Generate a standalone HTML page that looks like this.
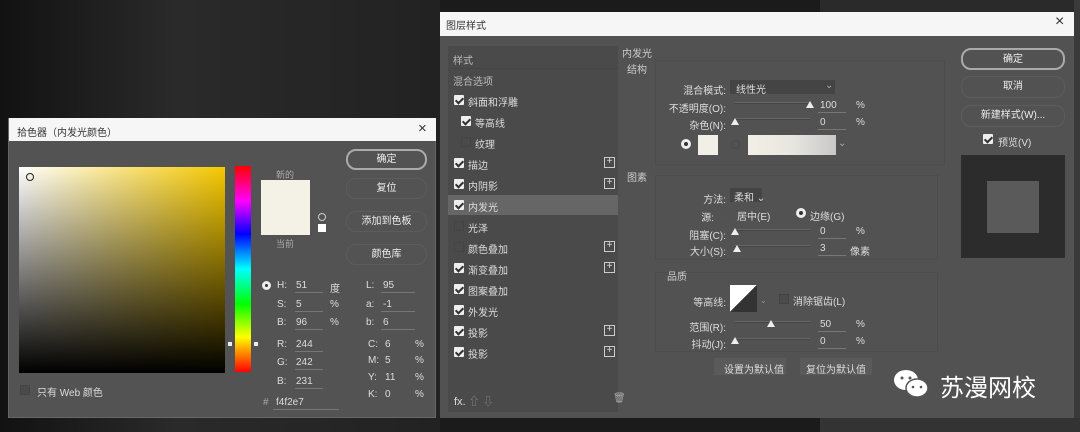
<!DOCTYPE html><html><head><meta charset="utf-8"><style>
*{margin:0;padding:0;box-sizing:border-box}
body{width:1080px;height:432px;overflow:hidden;background:#1b1b1b;font-family:"Liberation Sans","Noto Sans CJK SC",sans-serif;position:relative;color:#ddd;font-size:10px}
.a{position:absolute}
.t{position:absolute;white-space:nowrap}
.r{position:absolute;white-space:nowrap;text-align:right;width:100px}
.cb{position:absolute;width:10px;height:10px;background:#eee;border-radius:1px}
.cb:after{content:"";position:absolute;left:3px;top:1px;width:3px;height:6px;border:solid #333;border-width:0 2px 2px 0;transform:rotate(45deg)}
.ub{position:absolute;width:10px;height:10px;border:1px solid #444;background:#4a4a4a}
.pl{position:absolute;width:11px;height:11px;border:1px solid #ccc;left:604px;color:#ddd;font-size:10px;line-height:8px;text-align:center}
.btn{position:absolute;border:1px solid #777;border-radius:10px;text-align:center;color:#eee;font-size:10px}
.ln{position:absolute;height:1px;background:#777}
.sl{position:absolute;height:2px;background:#444;border-top:1px solid #666}
.tri{position:absolute;width:0;height:0;border-left:4px solid transparent;border-right:4px solid transparent;border-bottom:7px solid #eee}
</style></head><body>
<div class="a" style="left:0;top:0;width:440px;height:432px;background:linear-gradient(90deg,#121212,#2a2a2a 40%,#222)"></div>
<div class="a" style="left:820px;top:0;width:260px;height:14px;background:#2a2a2a"></div>
<div class="a" style="left:1074px;top:0;width:6px;height:432px;background:#3a3a3a"></div>
<div class="a" style="left:820px;top:418px;width:260px;height:14px;background:#333"></div>

<div class="a" style="left:440px;top:12px;width:634px;height:406px;background:#525252"></div>
<div class="a" style="left:440px;top:12px;width:634px;height:24px;background:#f6f6f6"></div>
<div class="t" style="left:446px;top:17px;color:#333;font-size:10px">图层样式</div>
<div class="t" style="left:1055px;top:13px;color:#333;font-size:16px">×</div>
<div class="a" style="left:448px;top:46px;width:170px;height:366px;background:#4a4a4a"></div>
<div class="t" style="left:453px;top:52px;color:#bbb">样式</div>
<div class="a" style="left:448px;top:68px;width:170px;height:1px;background:#444"></div>
<div class="t" style="left:453px;top:73px;color:#bbb">混合选项</div>
<div class="a" style="left:448px;top:195px;width:170px;height:20px;background:#666"></div>

<div class="cb" style="left:454px;top:95px"></div><div class="t" style="left:468px;top:94px">斜面和浮雕</div>
<div class="cb" style="left:461px;top:116px"></div><div class="t" style="left:475px;top:115px">等高线</div>
<div class="ub" style="left:461px;top:137px"></div><div class="t" style="left:475px;top:136px">纹理</div>
<div class="cb" style="left:454px;top:158px"></div><div class="t" style="left:468px;top:157px">描边</div><div class="pl" style="top:157px">+</div>
<div class="cb" style="left:454px;top:179px"></div><div class="t" style="left:468px;top:178px">内阴影</div><div class="pl" style="top:178px">+</div>
<div class="cb" style="left:454px;top:200px"></div><div class="t" style="left:468px;top:199px">内发光</div>
<div class="ub" style="left:454px;top:221px"></div><div class="t" style="left:468px;top:220px">光泽</div>
<div class="ub" style="left:454px;top:242px"></div><div class="t" style="left:468px;top:241px">颜色叠加</div><div class="pl" style="top:241px">+</div>
<div class="cb" style="left:454px;top:263px"></div><div class="t" style="left:468px;top:262px">渐变叠加</div><div class="pl" style="top:262px">+</div>
<div class="cb" style="left:454px;top:284px"></div><div class="t" style="left:468px;top:283px">图案叠加</div>
<div class="cb" style="left:454px;top:305px"></div><div class="t" style="left:468px;top:304px">外发光</div>
<div class="cb" style="left:454px;top:326px"></div><div class="t" style="left:468px;top:325px">投影</div><div class="pl" style="top:325px">+</div>
<div class="cb" style="left:454px;top:347px"></div><div class="t" style="left:468px;top:346px">投影</div><div class="pl" style="top:346px">+</div>
<div class="t" style="left:454px;top:393px;font-size:11px">fx. <span style="color:#888">⇧ ⇩</span></div>
<div class="t" style="left:613px;top:393px;color:#aaa">🗑</div>

<div class="a" style="left:655px;top:60px;width:290px;height:105px;border:1px solid #4c4c4c"></div>
<div class="t" style="left:622px;top:45px;color:#ccc">内发光</div>
<div class="t" style="left:627px;top:61px;color:#ccc">结构</div>
<div class="r" style="left:626px;top:82px">混合模式:</div>
<div class="a" style="left:730px;top:80px;width:105px;height:14px;background:#444"></div>
<div class="t" style="left:736px;top:81px">线性光</div><div class="t" style="left:825px;top:80px;color:#aaa">⌄</div>
<div class="r" style="left:626px;top:100px">不透明度(O):</div>
<div class="sl" style="left:735px;top:102px;width:75px"></div><div class="tri" style="left:806px;top:101px"></div>
<div class="t" style="left:820px;top:100px">100</div><div class="ln" style="left:818px;top:112px;width:28px"></div><div class="t" style="left:856px;top:100px">%</div>
<div class="r" style="left:626px;top:117px">杂色(N):</div>
<div class="sl" style="left:735px;top:118px;width:75px"></div><div class="tri" style="left:731px;top:118px"></div>
<div class="t" style="left:820px;top:117px">0</div><div class="ln" style="left:818px;top:129px;width:28px"></div><div class="t" style="left:856px;top:117px">%</div>
<div class="a" style="left:681px;top:139px;width:10px;height:10px;border-radius:50%;border:3px solid #eee;background:#333"></div>
<div class="a" style="left:698px;top:135px;width:20px;height:20px;background:#f2efe6"></div>
<div class="a" style="left:731px;top:140px;width:9px;height:9px;border-radius:50%;border:1px solid #4a4a4a"></div>
<div class="a" style="left:748px;top:135px;width:88px;height:20px;background:linear-gradient(90deg,#f2efe6,#e8e6e0 50%,#c8c8c8)"></div>
<div class="t" style="left:838px;top:138px;color:#aaa">⌄</div>

<div class="a" style="left:655px;top:175px;width:283px;height:85px;border:1px solid #4c4c4c"></div>
<div class="t" style="left:627px;top:169px;color:#ccc">图素</div>
<div class="r" style="left:626px;top:191px">方法:</div>
<div class="a" style="left:730px;top:188px;width:32px;height:14px;background:#444"></div>
<div class="t" style="left:734px;top:189px">柔和 ⌄</div>
<div class="r" style="left:614px;top:209px">源:</div>
<div class="a" style="left:719px;top:210px;width:8px;height:8px;border-radius:50%;border:1px solid #555"></div>
<div class="t" style="left:737px;top:208px">居中(E)</div>
<div class="a" style="left:796px;top:208px;width:10px;height:10px;border-radius:50%;border:3px solid #eee;background:#333"></div>
<div class="t" style="left:810px;top:208px">边缘(G)</div>
<div class="r" style="left:626px;top:227px">阻塞(C):</div>
<div class="sl" style="left:735px;top:229px;width:75px"></div><div class="tri" style="left:731px;top:228px"></div>
<div class="t" style="left:820px;top:226px">0</div><div class="ln" style="left:818px;top:238px;width:28px"></div><div class="t" style="left:856px;top:226px">%</div>
<div class="r" style="left:626px;top:243px">大小(S):</div>
<div class="sl" style="left:735px;top:245px;width:75px"></div><div class="tri" style="left:733px;top:245px"></div>
<div class="t" style="left:820px;top:243px">3</div><div class="ln" style="left:818px;top:255px;width:28px"></div><div class="t" style="left:850px;top:243px">像素</div>

<div class="a" style="left:655px;top:272px;width:283px;height:80px;border:1px solid #4c4c4c"></div>
<div class="t" style="left:667px;top:268px;color:#ccc">品质</div>
<div class="r" style="left:626px;top:294px">等高线:</div>
<div class="a" style="left:730px;top:285px;width:27px;height:27px;background:linear-gradient(135deg,#fff 50%,#333 50%)"></div>
<div class="t" style="left:760px;top:296px;color:#999;font-size:8px">⌄</div>
<div class="ub" style="left:779px;top:294px"></div>
<div class="t" style="left:793px;top:293px">消除锯齿(L)</div>
<div class="r" style="left:626px;top:319px">范围(R):</div>
<div class="sl" style="left:735px;top:321px;width:75px"></div><div class="tri" style="left:767px;top:320px"></div>
<div class="t" style="left:820px;top:319px">50</div><div class="ln" style="left:818px;top:331px;width:28px"></div><div class="t" style="left:856px;top:319px">%</div>
<div class="r" style="left:626px;top:336px">抖动(J):</div>
<div class="sl" style="left:735px;top:338px;width:75px"></div><div class="tri" style="left:731px;top:337px"></div>
<div class="t" style="left:820px;top:336px">0</div><div class="ln" style="left:818px;top:348px;width:28px"></div><div class="t" style="left:856px;top:336px">%</div>
<div class="a" style="left:714px;top:358px;width:72px;height:17px;background:#5a5a5a"></div><div class="t" style="left:724px;top:361px">设置为默认值</div>
<div class="a" style="left:800px;top:358px;width:72px;height:17px;background:#5a5a5a"></div><div class="t" style="left:806px;top:361px">复位为默认值</div>

<div class="btn" style="left:961px;top:48px;width:104px;height:22px;line-height:19px;border:2px solid #aaa">确定</div>
<div class="btn" style="left:961px;top:76px;width:104px;height:22px;line-height:20px;border-color:#5c5c5c">取消</div>
<div class="btn" style="left:961px;top:105px;width:104px;height:22px;line-height:20px;border-color:#5c5c5c">新建样式(W)...</div>
<div class="cb" style="left:983px;top:134px"></div><div class="t" style="left:998px;top:134px">预览(V)</div>
<div class="a" style="left:961px;top:155px;width:104px;height:103px;background:#2c2c2c"></div>
<div class="a" style="left:987px;top:181px;width:52px;height:52px;background:#5a5a5a"></div>

<svg class="a" style="left:892px;top:368px" width="40" height="32" viewBox="0 0 40 32"><ellipse cx="14" cy="12" rx="12" ry="10" fill="#fff"/><ellipse cx="25" cy="20" rx="11" ry="9" fill="#fff" stroke="#555" stroke-width="1.5"/><circle cx="10" cy="10" r="1.5" fill="#555"/><circle cx="18" cy="10" r="1.5" fill="#555"/><circle cx="21" cy="19" r="1.3" fill="#555"/><circle cx="29" cy="19" r="1.3" fill="#555"/></svg>
<div class="t" style="left:940px;top:368px;font-size:24px;color:#fff">苏漫网校</div>

<div class="a" style="left:8px;top:118px;width:428px;height:300px;background:#535353;border:1px solid #666"></div>
<div class="a" style="left:9px;top:118px;width:427px;height:23px;background:#f6f6f6"></div>
<div class="t" style="left:17px;top:124px;color:#333;font-size:10px">拾色器（内发光颜色）</div>
<div class="t" style="left:418px;top:120px;color:#333;font-size:15px">×</div>
<div class="a" style="left:19px;top:167px;width:206px;height:206px;background:linear-gradient(to bottom,rgba(0,0,0,0),#000),linear-gradient(to right,#fff,#f5c800)"></div>
<div class="a" style="left:26px;top:173px;width:8px;height:8px;border-radius:50%;border:1px solid #222"></div>
<div class="a" style="left:235px;top:166px;width:16px;height:206px;background:linear-gradient(#f00,#f0f 17%,#00f 33%,#0ff 50%,#0f0 67%,#ff0 83%,#f00)"></div>
<div class="a" style="left:228px;top:342px;width:4px;height:4px;background:#eee"></div><div class="a" style="left:254px;top:342px;width:4px;height:4px;background:#eee"></div>
<div class="t" style="left:276px;top:168px;color:#aaa;font-size:9px">新的</div>
<div class="a" style="left:261px;top:180px;width:49px;height:55px;background:#f4f2e7"></div>
<div class="t" style="left:276px;top:237px;color:#aaa;font-size:9px">当前</div>
<div class="a" style="left:318px;top:213px;width:8px;height:8px;border-radius:50%;border:1px solid #ccc"></div>
<div class="a" style="left:318px;top:224px;width:8px;height:8px;background:#fff"></div>
<div class="btn" style="left:346px;top:149px;width:81px;height:21px;line-height:18px;border:2px solid #aaa">确定</div>
<div class="btn" style="left:346px;top:178px;width:81px;height:21px;line-height:19px;border-color:#5c5c5c">复位</div>
<div class="btn" style="left:346px;top:211px;width:81px;height:21px;line-height:19px;border-color:#5c5c5c">添加到色板</div>
<div class="btn" style="left:346px;top:244px;width:81px;height:21px;line-height:19px;border-color:#5c5c5c">颜色库</div>

<div class="a" style="left:262px;top:281px;width:9px;height:9px;border-radius:50%;border:3px solid #eee;background:#333"></div>
<div class="t" style="left:277px;top:280px">H:</div><div class="t" style="left:296px;top:280px">51</div><div class="ln" style="left:295px;top:292px;width:28px"></div><div class="t" style="left:330px;top:280px">度</div>
<div class="t" style="left:277px;top:299px">S:</div><div class="t" style="left:296px;top:299px">5</div><div class="ln" style="left:295px;top:311px;width:28px"></div><div class="t" style="left:330px;top:299px">%</div>
<div class="t" style="left:277px;top:317px">B:</div><div class="t" style="left:296px;top:317px">96</div><div class="ln" style="left:295px;top:329px;width:28px"></div><div class="t" style="left:330px;top:317px">%</div>
<div class="t" style="left:277px;top:339px">R:</div><div class="t" style="left:296px;top:339px">244</div><div class="ln" style="left:295px;top:351px;width:28px"></div>
<div class="t" style="left:277px;top:357px">G:</div><div class="t" style="left:296px;top:357px">242</div><div class="ln" style="left:295px;top:369px;width:28px"></div>
<div class="t" style="left:277px;top:376px">B:</div><div class="t" style="left:296px;top:376px">231</div><div class="ln" style="left:295px;top:388px;width:28px"></div>
<div class="t" style="left:263px;top:397px;color:#aaa">#</div><div class="t" style="left:276px;top:397px">f4f2e7</div><div class="ln" style="left:273px;top:409px;width:66px"></div>
<div class="t" style="left:366px;top:280px">L:</div><div class="t" style="left:383px;top:280px">95</div><div class="ln" style="left:381px;top:292px;width:34px"></div>
<div class="t" style="left:366px;top:299px">a:</div><div class="t" style="left:383px;top:299px">-1</div><div class="ln" style="left:381px;top:311px;width:34px"></div>
<div class="t" style="left:366px;top:317px">b:</div><div class="t" style="left:383px;top:317px">6</div><div class="ln" style="left:381px;top:329px;width:34px"></div>
<div class="t" style="left:368px;top:339px">C:</div><div class="t" style="left:385px;top:339px">6</div><div class="t" style="left:415px;top:339px">%</div>
<div class="t" style="left:368px;top:355px">M:</div><div class="t" style="left:385px;top:355px">5</div><div class="t" style="left:415px;top:355px">%</div>
<div class="t" style="left:368px;top:372px">Y:</div><div class="t" style="left:385px;top:372px">11</div><div class="t" style="left:415px;top:372px">%</div>
<div class="t" style="left:368px;top:389px">K:</div><div class="t" style="left:385px;top:389px">0</div><div class="t" style="left:415px;top:389px">%</div>
<div class="ub" style="left:20px;top:385px"></div><div class="t" style="left:37px;top:384px">只有 Web 颜色</div>
</body></html>
